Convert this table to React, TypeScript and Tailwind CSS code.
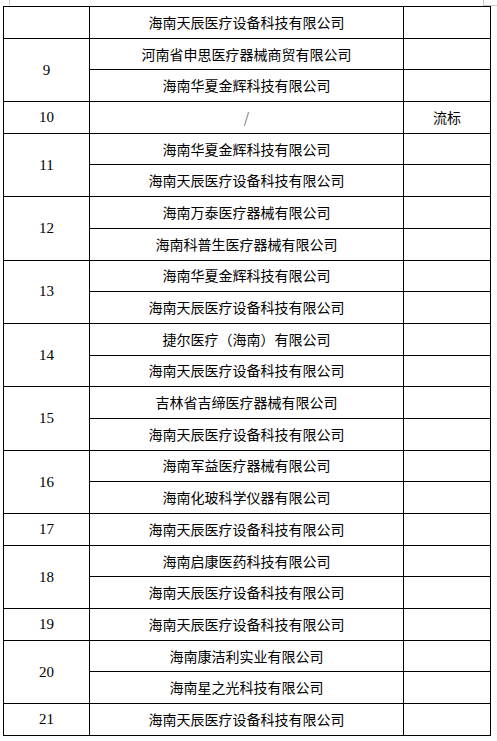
type Group = { no: string; names: string[]; note?: string };

const groups: Group[] = [
  { no: "", names: ["海南天辰医疗设备科技有限公司"] },
  { no: "9", names: ["河南省申思医疗器械商贸有限公司", "海南华夏金辉科技有限公司"] },
  { no: "10", names: ["/"], note: "流标" },
  { no: "11", names: ["海南华夏金辉科技有限公司", "海南天辰医疗设备科技有限公司"] },
  { no: "12", names: ["海南万泰医疗器械有限公司", "海南科普生医疗器械有限公司"] },
  { no: "13", names: ["海南华夏金辉科技有限公司", "海南天辰医疗设备科技有限公司"] },
  { no: "14", names: ["捷尔医疗（海南）有限公司", "海南天辰医疗设备科技有限公司"] },
  { no: "15", names: ["吉林省吉缔医疗器械有限公司", "海南天辰医疗设备科技有限公司"] },
  { no: "16", names: ["海南军益医疗器械有限公司", "海南化玻科学仪器有限公司"] },
  { no: "17", names: ["海南天辰医疗设备科技有限公司"] },
  { no: "18", names: ["海南启康医药科技有限公司", "海南天辰医疗设备科技有限公司"] },
  { no: "19", names: ["海南天辰医疗设备科技有限公司"] },
  { no: "20", names: ["海南康洁利实业有限公司", "海南星之光科技有限公司"] },
  { no: "21", names: ["海南天辰医疗设备科技有限公司"] },
];

const cjk = "font-['SimSun','Noto_Sans_CJK_SC',sans-serif]";
const cell = "border border-black p-0 text-center align-middle";

const App = () => {
  return (
    <div className="w-[497px] h-[741px] bg-white overflow-hidden">
      {/* page corner marks */}
      <div className="flex h-[6px]">
        <div className="ml-[9px] w-px h-[5px] bg-[#c8c8c8]" />
        <div className="ml-[473px] w-[14px] h-[6px] border-l border-b border-[#c8c8c8]" />
      </div>

      <table className="ml-[3px] w-[487px] border-collapse table-fixed text-[14px] text-black">
        <colgroup>
          <col className="w-[86px]" />
          <col className="w-[314px]" />
          <col className="w-[87px]" />
        </colgroup>
        <tbody>
          {groups.map((g, gi) =>
            g.names.map((name, i) => (
              <tr key={`${gi}-${i}`} className="h-[31.7px]">
                {i === 0 && (
                  <td
                    rowSpan={g.names.length}
                    className={`${cell} font-['Liberation_Serif',serif] text-[15px]`}
                  >
                    {g.no}
                  </td>
                )}
                <td className={`${cell} ${cjk} ${name === "/" ? "text-[#777]" : ""}`}>
                  {name}
                </td>
                <td className={`${cell} ${cjk}`}>{i === 0 ? g.note ?? "" : ""}</td>
              </tr>
            ))
          )}
        </tbody>
      </table>
    </div>
  );
};

export default App;
